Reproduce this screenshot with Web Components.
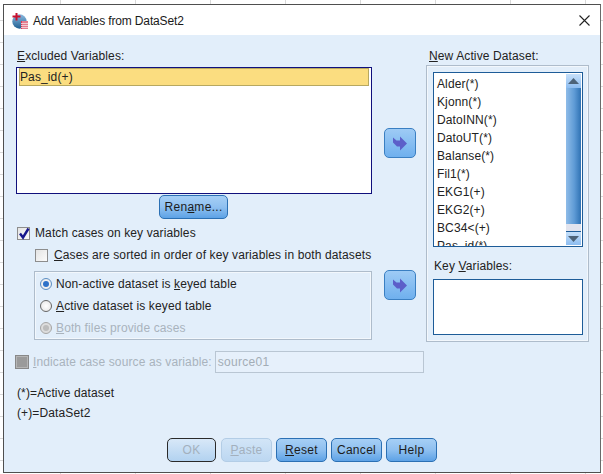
<!DOCTYPE html>
<html><head><meta charset="utf-8">
<style>
html,body{margin:0;padding:0}
body{width:603px;height:474px;overflow:hidden;font:12px "Liberation Sans",Arial,sans-serif;color:#222;
background-color:#fff;
background-image:linear-gradient(#d9d9d9 1px,transparent 1px),linear-gradient(90deg,#d9d9d9 1px,transparent 1px);
background-size:75px 22px;background-position:60px 20px}
u{text-decoration:underline;text-underline-offset:1px}
</style></head><body>
<template id="t-window">
<style>
:host{display:flex;flex-direction:column;box-sizing:border-box;width:598px;height:469px;margin:4px 0 0 3px;border:1px solid #4f4f4f;border-right-color:#6a6a6a;background:#e2eefa;letter-spacing:.12px}
.bar{height:30px;background:#fff;display:flex;align-items:center;padding:0 10px 0 8px;gap:5px;flex:none;color:#1a1a1a}
.bar svg.ic{flex:none;margin-top:2px}
.bar span{flex:1;margin-top:2px;letter-spacing:-.14px}
.body{flex:1;padding:11px 0 0 12px;display:flex;flex-direction:column;min-height:0}
.top{display:flex;align-items:flex-start}
.left{width:356px;flex:none;display:flex;flex-direction:column}
.mid{width:32px;margin-left:12px;flex:none;display:flex;flex-direction:column;padding-top:82px;gap:112px}
.right{margin-left:10px;width:163px;flex:none}
</style>
<div class="bar">
<svg class="ic" width="16" height="16" viewBox="0 0 16 16">
<defs><linearGradient id="g" x1="0" y1="0" x2="0" y2="1"><stop offset="0" stop-color="#8dbbe0"/><stop offset="1" stop-color="#1f5f92"/></linearGradient></defs>
<circle cx="7.5" cy="8.5" r="7.2" fill="url(#g)"/>
<path d="M0.5 3.5h8M4.5 0v7.5" stroke="#c8102e" stroke-width="2" fill="none"/>
<path d="M9 8h7v8H9z" fill="#d83c58"/>
<path d="M9 10.5h7M9 12.5h7M9 14.5h7M11 8v8M13 8v8M15 8v8" stroke="#f8dde1" stroke-width=".8"/>
</svg>
<span><slot name="title"></slot></span>
<svg width="11" height="11" viewBox="0 0 11 11"><path d="M.5.5l10 10M10.5.5l-10 10" stroke="#222" stroke-width="1.1"/></svg>
</div>
<div class="body">
<div class="top">
<div class="left"><slot name="left"></slot></div>
<div class="mid"><slot name="mid"></slot></div>
<div class="right"><slot name="right"></slot></div>
</div>
<slot></slot>
</div>
</template>

<template id="t-list">
<style>
:host{display:block;box-sizing:border-box;position:relative;background:#fff;border:1px solid var(--bc,#1d5c98);overflow:hidden;height:var(--h,100px)}
.rows{padding:var(--pt,2px) 0 0 var(--pl,3px)}
</style>
<div class="rows"><slot></slot></div>
<slot name="over"></slot>
</template>

<template id="t-row">
<style>
:host{display:block;height:18px;line-height:18px;white-space:nowrap;color:#222}
:host([selected]){box-sizing:border-box;background:#fbdd80;border:1px solid #b7a860;line-height:17px;margin-right:2px;color:#222}
</style><slot></slot>
</template>

<template id="t-scroll">
<style>
:host{position:absolute;display:flex;flex-direction:column;box-sizing:border-box;top:1px;right:1px;bottom:1px;width:15px;background:#fff}
.b{height:14px;flex:none;background:linear-gradient(#c6e0fa,#8dbdf0);display:flex;align-items:center;justify-content:center;box-sizing:border-box}
.b.d{border-top:1px solid #1d5c98}
.t{flex:1;background:linear-gradient(90deg,#8fbce8,#5f9bd6 55%,#2f72b4)}
.e{height:7px;flex:none;background:#e2e4ee}
svg{display:block}
</style>
<div class="b"><svg width="11" height="6"><path d="M5.5 0L11 6H0z" fill="#4d6378"/></svg></div>
<div class="t"></div><div class="e"></div>
<div class="b d"><svg width="11" height="6"><path d="M0 0h11L5.5 6z" fill="#4d6378"/></svg></div>
</template>

<template id="t-btn">
<style>
:host{display:inline-flex;align-items:center;justify-content:center;box-sizing:border-box;height:24px;width:var(--w,51px);border-radius:5px;border:1px solid #2b70b4;background:linear-gradient(#a6cff5,#8fc0f0 50%,#5da2e6);color:#1c1c1c;letter-spacing:.3px}
:host([disabled]){color:#a3b0bd;border-color:#b3cde6;background:linear-gradient(#d2e5f7,#bcd7f1)}
:host([default]){border-color:#2a2a2a;background:linear-gradient(#d8e8f8,#b2d2f0)}
</style><slot></slot>
</template>

<template id="t-arrow">
<style>
:host{display:flex;align-items:center;justify-content:center;box-sizing:border-box;width:32px;height:30px;border-radius:5px;border:1px solid #3a7fc2;background:linear-gradient(#9ecbf5,#6fb0ee)}
</style>
<svg width="16" height="15" viewBox="0 0 16 15"><path d="M1 1.5L4.5 4.5H8V0.5L15 7.5L8 14.5V10.5H5L1 6.5Z" fill="#5c5fc9"/></svg>
</template>

<template id="t-check">
<style>
:host{display:flex;align-items:center;height:22px;gap:5px;white-space:nowrap}
.x{box-sizing:border-box;width:13px;height:13px;flex:none;border:1px solid #8d8d8d;background:linear-gradient(135deg,#e4e4e4,#fbfbfb);position:relative}
:host([disabled]){color:#a9b3bd}
:host([disabled]) .x{width:14px;height:14px;background:#9a9a9a;border-color:#888;box-shadow:inset 0 0 0 1px #b5b5b5}
svg{display:none;position:absolute;left:0;top:-1px}
:host([checked]) svg{display:block}
</style>
<span class="x"><svg width="13" height="13" viewBox="0 0 13 13"><path d="M2 6.5L5 10.5L10.5 1.5" fill="none" stroke="#17178c" stroke-width="2.4"/></svg></span><slot></slot>
</template>

<template id="t-radio">
<style>
:host{display:flex;align-items:center;height:22px;gap:4px;white-space:nowrap}
.o{box-sizing:border-box;width:12px;height:12px;border-radius:50%;border:1px solid #666;background:radial-gradient(#fff,#e3e3e3);flex:none;display:flex;align-items:center;justify-content:center}
.o i{display:none;width:6px;height:6px;border-radius:50%;background:#2f72c8}
:host([checked]) .o i{display:block}
:host([checked]) .o{border-color:#5b8ec4}
:host([disabled]){color:#a9b3bd}
:host([disabled]) .o{border-color:#a5a5a5;background:#ddd}
:host([disabled]) .o i{display:block;background:#bcbcbc}
</style><span class="o"><i></i></span><slot></slot>
</template>

<template id="t-group">
<style>:host{display:block;box-sizing:border-box;border:1px solid #aebccb;box-shadow:inset 0 0 0 1px #f2f7fc}</style><slot></slot>
</template>

<template id="t-text">
<style>:host{display:block;white-space:nowrap;line-height:16px;height:16px}</style><slot></slot>
</template>

<template id="t-input">
<style>:host{display:block;box-sizing:border-box;width:209px;height:22px;border:1px solid #b9c6d3;line-height:20px;padding-left:2px;color:#a3adb6;background:#e6f0fb;letter-spacing:.3px}</style><slot></slot>
</template>

<x-window>
<span slot="title">Add Variables from DataSet2</span>

<div slot="left" style="display:flex;flex-direction:column">
<x-text style="margin:2px 0 0 1px"><u>E</u>xcluded Variables:</x-text>
<x-list style="--bc:#10107c;--h:127px;margin-top:3px;--pt:0px;--pl:2px">
<x-row selected>Pas_id(+)</x-row>
</x-list>
<x-btn style="--w:69px;margin:1px 0 0 143px">Ren<u>a</u>me...</x-btn>
<x-check checked style="margin:3px 0 0 1px">Match cases on key variables</x-check>
<x-check style="margin:0 0 0 19px;gap:6px"><span><u>C</u>ases are sorted in order of key variables in both datasets</span></x-check>
<x-group style="margin:5px 0 0 18px;width:338px;height:69px;padding:1px 0 0 5px">
<x-radio checked><span>Non-active dataset is <u>k</u>eyed table</span></x-radio>
<x-radio><span><u>A</u>ctive dataset is keyed table</span></x-radio>
<x-radio disabled><span><u>B</u>oth files provide cases</span></x-radio>
</x-group>
</div>

<x-arrow slot="mid"></x-arrow>
<x-arrow slot="mid"></x-arrow>

<div slot="right">
<x-text style="margin:2px 0 0 3px"><u>N</u>ew Active Dataset:</x-text>
<x-group style="margin-top:1px;height:277px;padding:6px 5px 0 6px">
<x-list style="--h:175px;--pt:2px;--pl:3px">
<x-row>Alder(*)</x-row><x-row>Kjonn(*)</x-row><x-row>DatoINN(*)</x-row><x-row>DatoUT(*)</x-row><x-row>Balanse(*)</x-row><x-row>Fil1(*)</x-row><x-row>EKG1(+)</x-row><x-row>EKG2(+)</x-row><x-row>BC34&lt;(+)</x-row><x-row>Pas_id(*)</x-row>
<x-scroll slot="over"></x-scroll>
</x-list>
<x-text style="margin:11px 0 0 1px">Key <u>V</u>ariables:</x-text>
<x-list style="--h:56px;margin-top:5px"></x-list>
</x-group>
</div>

<div style="display:flex;align-items:center;gap:3px;margin:9px 0 0 -1px;height:22px">
<x-check disabled style="gap:4px"><span><u>I</u>ndicate case source as variable:</span></x-check>
<x-input>source01</x-input>
</div>
<x-text style="margin:12px 0 0 1px">(*)=Active dataset</x-text>
<x-text style="margin:4px 0 0 1px">(+)=DataSet2</x-text>
<div style="display:flex;gap:4px;margin:17px 0 0 151px">
<x-btn disabled default style="--w:49px;margin-right:1px">OK</x-btn>
<x-btn disabled><span><u>P</u>aste</span></x-btn>
<x-btn><span><u>R</u>eset</span></x-btn>
<x-btn>Cancel</x-btn>
<x-btn>Help</x-btn>
</div>
</x-window>

<script>
for (const n of ['window','list','row','scroll','btn','arrow','check','radio','group','text','input']) {
  customElements.define('x-'+n, class extends HTMLElement {
    constructor(){ super(); this.attachShadow({mode:'open'}).appendChild(document.getElementById('t-'+n).content.cloneNode(true)); }
  });
}
</script>
</body></html>
